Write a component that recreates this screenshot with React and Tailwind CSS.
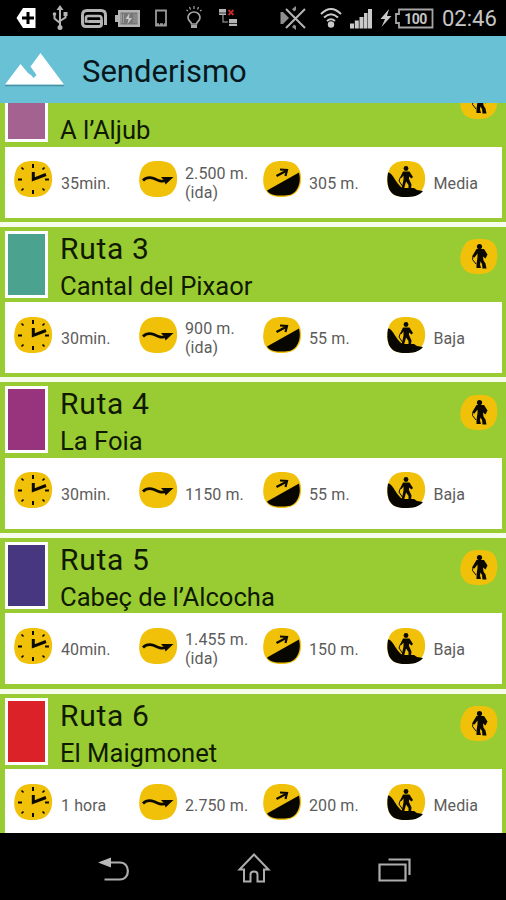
import React from 'react';

const routes = [
    { id: 2, name: 'A l’Aljub', color: '#a3628f', time: '35min.', distance: '2.500 m.', oneWay: true, climb: '305 m.', level: 'Media' },
    { id: 3, name: 'Cantal del Pixaor', color: '#4ba28f', time: '30min.', distance: '900 m.', oneWay: true, climb: '55 m.', level: 'Baja' },
    { id: 4, name: 'La Foia', color: '#98337d', time: '30min.', distance: '1150 m.', climb: '55 m.', level: 'Baja' },
    { id: 5, name: 'Cabeç de l’Alcocha', color: '#473780', time: '40min.', distance: '1.455 m.', oneWay: true, climb: '150 m.', level: 'Baja' },
    { id: 6, name: 'El Maigmonet', color: '#db2229', time: '1 hora', distance: '2.750 m.', climb: '200 m.', level: 'Media' },
];

const BLOB = 'M19 0C28 0 33 2 36 8C39 14 39 23 35 29C31 35 25 36 18 36C10 36 5 34 2 28C-1 22 0 13 3 7C7 1 12 0 19 0Z';

const ClockIcon = () => (
    <svg className="block h-[36px] w-[39px]" viewBox="0 0 39 36" fill="none">
        <path d={BLOB} fill="#f1c109" />
        <g stroke="#0c0a00" strokeWidth="2">
            <path d="M19 3v4M19 29v4M4 18.500h4M31 18.500h4" />
            <path d="M7.500 6.500l2 2M30.500 6.500l-2 2M7.500 29.500l2-2M30.500 29.500l-2-2" strokeWidth="1.700" />
        </g>
        <path d="M19.300 11v7.300L32 13.500" stroke="#0c0a00" strokeWidth="3" />
    </svg>
);

const DistanceIcon = () => (
    <svg className="block h-[36px] w-[39px]" viewBox="0 0 39 36" fill="none">
        <path d={BLOB} fill="#f1c109" />
        <path d="M4 19.500C7 16.500 11 16 15 17.500C19 19.500 22 21 28 19.500" stroke="#0c0a00" strokeWidth="2.800" />
        <path d="M22 16L34.500 16L26.500 23.500L25.500 20Z" fill="#0c0a00" />
    </svg>
);

const ClimbIcon = () => (
    <svg className="block h-[36px] w-[39px]" viewBox="0 0 39 36" fill="none">
        <path d={BLOB} fill="#f1c109" />
        <path d="M4 29.500L36 11.500C37.500 18 37 24 33.500 29C29 35 24 34.500 17 34.500C10 34.500 6 33 4 29.500Z" fill="#080600" />
        <path d="M13.500 15L23 10" stroke="#0c0a00" strokeWidth="2.400" />
        <path d="M17 8.500L24 9L22.500 15" stroke="#0c0a00" strokeWidth="2.200" />
    </svg>
);

const LevelIcon = () => (
    <svg className="block h-[36px] w-[39px]" viewBox="0 0 39 36" fill="none">
        <path d={BLOB} fill="#f1c109" />
        <path d="M1 11.500C4 11 7 17 9 20C12 24 14 27.500 18 27L27 27L30 29L36 30C32 35 26 36 18 36C10 36 5 34 2 28C0 23 0 17 1 11.500Z" fill="#080600" />
        <circle cx="19" cy="7.500" r="2.400" fill="#0c0a00" />
        <path d="M16 10.500L22.500 10.500L26 16L24.500 17.500L22 15.500V18L24.500 23.500L24 28H21.500V24L19 20.500L17 28H14.500L16.500 18.500V14.500L14.500 17L13 16.500Z" fill="#0c0a00" />
        <path d="M13.500 16L12 20L16 26" stroke="#0c0a00" strokeWidth="1" />
    </svg>
);

const HikerBadge = () => (
    <svg className="block h-[35px] w-[38px]" viewBox="0 0 38 35" fill="none">
        <path d="M19 0C28 0 33 1 36 8C38 14 38 23 34 29C30 34 25 35 18 35C10 35 5 33 2 27C-1 21 0 13 4 7C7 1 12 0 19 0Z" fill="#f1c109" />
        <circle cx="19.500" cy="7.500" r="2.600" fill="#0c0a00" />
        <path d="M16.500 10L24 10L27.500 15.500L25.500 19.500L23 17.500L23.500 21.500L25.500 24.500L26.500 29.500H22.500L22 25L20.500 22.500L20 25.500L21 29H16.500L16.500 25L17.500 18V14.500L14.500 18.500L12 17.500Z" fill="#0c0a00" />
        <path d="M13 17.500L12.500 20.500L16 25" stroke="#0c0a00" strokeWidth="1" />
    </svg>
);

const StatusBar = () => (
    <div className="flex h-[36px] shrink-0 items-center bg-black pl-[16px]">
        <svg className="h-[22px] w-[20px]" viewBox="0 0 20 22">
            <path d="M7 1H19.500V21H7L0.500 11Z" fill="#fff" />
            <path d="M12 5v12M6 11h12" stroke="#000" strokeWidth="3" />
        </svg>
        <svg className="ml-[16px] h-[26px] w-[16px]" viewBox="0 0 16 26" fill="none" stroke="#b4b4b4" strokeWidth="2">
            <path d="M8 3v20M2.500 9v4.500L8 18M13.500 9v3.500L8 16" />
            <path d="M8 0l3.500 5h-7Z" fill="#b4b4b4" stroke="none" />
            <circle cx="8" cy="22.500" r="2.500" fill="#b4b4b4" stroke="none" />
            <circle cx="2.500" cy="9" r="1.800" fill="#b4b4b4" stroke="none" />
            <path d="M11.500 7h4v4h-4Z" fill="#b4b4b4" stroke="none" />
        </svg>
        <svg className="mt-[1px] ml-[13px] h-[20px] w-[26px]" viewBox="0 0 26 20" fill="none" stroke="#b4b4b4">
            <path d="M24.500 16V6Q24.500 1.500 20 1.500H6Q1.500 1.500 1.500 6V14Q1.500 17.500 5 17.500H18Q20.500 17.500 20.500 15V12.500H8" strokeWidth="3" />
            <path d="M20.500 13V9.500Q20.500 7 18 7H7Q5 7 5 9V12.500H9" strokeWidth="2.600" />
        </svg>
        <svg className="ml-[8px] h-[19px] w-[25px]" viewBox="0 0 25 19">
            <path d="M0 6h3V1H25V18H3V13H0Z" fill="#b4b4b4" />
            <path d="M5.500 3.500H22.500V15.500H5.500Z" fill="#777" />
            <path d="M14.500 4L10.500 10H13.500L12.500 15L17 9H14Z" fill="#c9c9c9" />
            <path d="M6.500 5v9M8.500 5v9M19 5v9M21 5v9" stroke="#aaa" strokeWidth="0.700" />
        </svg>
        <svg className="ml-[14px] h-[18px] w-[14px]" viewBox="0 0 14 18" fill="none" stroke="#9a9a9a">
            <path d="M2 1.500H12V16.500H2Z" strokeWidth="1.800" />
            <path d="M2 15.500H12" strokeWidth="2.600" strokeDasharray="3 1" />
        </svg>
        <svg className="ml-[17px] h-[24px] w-[18px]" viewBox="0 0 18 24" fill="none" stroke="#a5a5a5" strokeWidth="1.700">
            <path d="M6.500 18C6.500 16 3 15 3 11.500A6 5.500 0 0 1 15 11.500C15 15 11.500 16 11.500 18Z" />
            <path d="M6 20.500h6" strokeWidth="3" />
            <path d="M9 0v3M4.500 1l1 2.500M13.500 1l-1 2.500M1.500 4l1.500 1M16.500 4l-1.500 1" strokeWidth="1.200" />
        </svg>
        <svg className="ml-[16px] h-[20px] w-[18px]" viewBox="0 0 18 20" fill="none">
            <path d="M0 1h7v6H0ZM10 11h8v7h-8Z" fill="#b4b4b4" />
            <path d="M0 5h7M10 15.500h8" stroke="#333" />
            <path d="M4 7v7h5" stroke="#777" strokeWidth="1.500" />
            <path d="M9.500 2l5 5M14.500 2l-5 5" stroke="#c22a2a" strokeWidth="1.800" />
        </svg>
        <svg className="ml-[43px] h-[26px] w-[26px]" viewBox="0 0 26 26" fill="none">
            <path d="M0.500 7h2.500l6 6-6 6H0.500Z" fill="#8f8f8f" />
            <path d="M6 4L25 23M25 4L6 23" stroke="#b4b4b4" strokeWidth="2" />
            <path d="M12 4l4-3v4l-2 1.500ZM12 22l4 3v-4l-2-1.500Z" fill="#8f8f8f" />
        </svg>
        <svg className="ml-[14px] h-[22px] w-[22px]" viewBox="0 0 22 22" fill="none" stroke="#cacaca" strokeWidth="2">
            <path d="M1 7Q11-3 21 7M4 10.500Q11 4 18 10.500M7 14Q11 10.500 15 14" />
            <circle cx="11" cy="17.500" r="3.200" fill="#cacaca" stroke="none" />
        </svg>
        <svg className="ml-[7px] h-[21px] w-[24px]" viewBox="0 0 24 21" fill="#cacaca">
            <path d="M1 15.500h4V20.500H1ZM5.800 12.500h4v8h-4ZM10.500 9h4v11.500h-4ZM15 5h3.500v15.500H15ZM19 1h4v19.500h-4Z" />
        </svg>
        <svg className="ml-[7px] h-[18px] w-[12px]" viewBox="0 0 12 18" fill="#cacaca">
            <path d="M9 0L0.500 10H5L1.500 18L11.500 7H7Z" />
        </svg>
        <div className="relative ml-[2px] h-[21px] w-[40px]">
            <svg className="h-[21px] w-[40px]" viewBox="0 0 40 21" fill="none" stroke="#a5a5a5" strokeWidth="1.800">
                <path d="M5 1.500H38.500V19.500H5V15H2V6H5Z" />
            </svg>
            <span className="absolute inset-0 pl-[3px] text-center text-[14px] leading-[22px] font-bold tracking-[-0.5px] text-[#c4c4c4]">100</span>
        </div>
        <span className="ml-[8px] pt-[2px] whitespace-nowrap text-[22px] leading-[34px] text-[#c6c6c6]">02:46</span>
    </div>
);

const AppHeader = () => (
    <div className="flex h-[67px] shrink-0 items-center bg-[#68c1d5] pl-[5px]">
        <svg className="mt-[1px] h-[35px] w-[59px]" viewBox="0 0 59 35">
            <path d="M0 32.500H59" stroke="#488f9f" strokeWidth="1.500" />
            <path d="M0 31.500L15.500 11L23 20L26.500 22.500L28.500 25L31.500 22L25.500 13.500L35.500 0L59 31.500Z" fill="#fff" />
        </svg>
        <h1 className="ml-[18px] pt-[4px] text-[31px] leading-[40px] text-[#08171b]">Senderismo</h1>
    </div>
);

const RouteCard = ({ route }) => (
    <div className="mb-[5px] h-[150.67px] shrink-0 bg-[#99cc32] px-[5px] pt-[4px] pr-[4px]">
        <div className="flex h-[71.5px]">
            <div className="h-[67px] w-[43px] border-[3px] border-white" style={{ backgroundColor: route.color }} />
            <div className="ml-[12px] flex-1 whitespace-nowrap text-[#101a00]">
                <div className="h-[37px] text-[30px] leading-[36px] tracking-[0.7px]">Ruta {route.id}</div>
                <div className="text-[25.6px] leading-[36px]">{route.name}</div>
            </div>
            <div className="pt-[8.5px] pr-[4px]">
                <HikerBadge />
            </div>
        </div>
        <div className="flex h-[71px] bg-white pt-[14.5px] pl-[9px] text-[16px] leading-[19px] tracking-[0.1px] text-[#5c5c5c]">
            <div className="flex w-[125px]">
                <ClockIcon />
                <span className="ml-[8px] pt-[12.5px] whitespace-nowrap">{route.time}</span>
            </div>
            <div className="flex w-[124px]">
                <DistanceIcon />
                <span className={route.oneWay ? 'ml-[7px] pt-[2.5px] whitespace-nowrap' : 'ml-[7px] pt-[12.5px] whitespace-nowrap'}>
                    {route.distance}
                    {route.oneWay && <><br />(ida)</>}
                </span>
            </div>
            <div className="flex w-[124px]">
                <ClimbIcon />
                <span className="ml-[7px] pt-[12.5px] whitespace-nowrap">{route.climb}</span>
            </div>
            <div className="flex">
                <LevelIcon />
                <span className="ml-[7.5px] pt-[12.5px] whitespace-nowrap">{route.level}</span>
            </div>
        </div>
    </div>
);

const NavBar = () => (
    <div className="flex h-[67px] shrink-0 items-center bg-black pl-[98px] pt-[7px]">
        <svg className="h-[30px] w-[32px]" viewBox="0 0 32 30" fill="none">
            <path d="M12 7.500H22C32.500 7.500 32.500 24.500 22 24.500H6.500" stroke="#adadad" strokeWidth="2.200" />
            <path d="M0 7.500L13 2.500V12.500Z" fill="#b8b8b8" />
        </svg>
        <svg className="mb-[5px] ml-[107px] h-[34px] w-[34px]" viewBox="0 0 34 34" fill="none" stroke="#adadad" strokeWidth="2">
            <path d="M17 3.500L31.500 18.500H27V30.500H20.500V23.500Q20.500 20.500 17 20.500Q13.500 20.500 13.500 23.500V30.500H7V18.500H2.500Z" />
        </svg>
        <svg className="ml-[106px] h-[28px] w-[34px]" viewBox="0 0 34 28" fill="none" stroke="#adadad" strokeWidth="2.200">
            <path d="M2.500 8.500H28.500V24.500H2.500Z" />
            <path d="M11.500 3.500H32.500V19" />
        </svg>
    </div>
);

export default function App() {
    return (
        <div className="flex h-[900px] w-[506px] flex-col overflow-hidden bg-black font-['Roboto',sans-serif]">
            <StatusBar />
            <AppHeader />
            <div className="h-[730px] shrink-0 overflow-hidden bg-[#f7fdec]">
                <div className="-mt-[32px] flex flex-col">
                    {routes.map((route) => (
                        <RouteCard key={route.id} route={route} />
                    ))}
                </div>
            </div>
            <NavBar />
        </div>
    );
}
